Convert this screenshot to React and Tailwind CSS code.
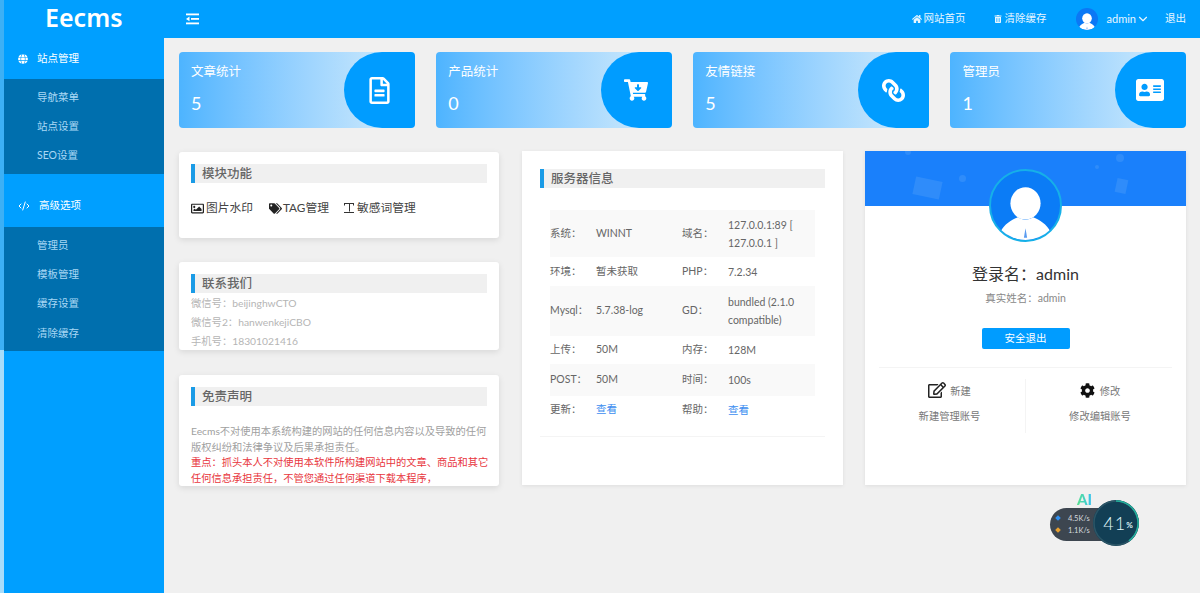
import React from 'react';
import { CodeXml, ChevronDown } from 'lucide-react';
import { FaRegFileAlt, FaCartArrowDown, FaLink, FaAddressCard, FaHome, FaTrashAlt, FaRegImage, FaTags, FaRegEdit, FaCog, FaGlobe } from 'react-icons/fa';

const font = "font-['Lato','Noto_Sans_CJK_SC',sans-serif]";

const UserGlyph = ({ className }) => (
  <svg viewBox="0 0 64 64" className={className}>
    <ellipse cx="32" cy="30" rx="14" ry="15" fill="#fff" />
    <path d="M9 56c3-6 10-11 16-13 4 3 10 3 14 0 6 2 13 7 16 13-6 5-14 8-23 8S15 61 9 56z" fill="#fff" />
    <path d="M32 53l-1.500 9h3z" fill="#5a9bf0" />
  </svg>
);

const OutdentIcon = () => (
  <svg viewBox="0 0 13 12" className="w-[13px] h-[12px] ml-[22px]" fill="#fff">
    <rect x="0" y="0.500" width="13" height="1.800" />
    <rect x="5" y="5" width="8" height="1.800" />
    <path d="M0 5.900l3.500-2.400v4.800z" />
    <rect x="0" y="9.500" width="13" height="1.800" />
  </svg>
);

const IBeamIcon = () => (
  <svg viewBox="0 0 12 12" className="w-[12px] h-[12px] ml-[14px] mr-[2px]" fill="#333">
    <path d="M1 1h10v2.500h-1V2H7v7.500H6V2H6h-1v7.500H5V2H2v1.500H1zM1 10h10v1H1z" />
  </svg>
);

const menus = [
  { title: '站点管理', icon: <FaGlobe size={10} />, h: 'h-[41px]', items: ['导航菜单', '站点设置', 'SEO设置'] },
  { title: '高级选项', icon: <CodeXml size={12} strokeWidth={2} />, h: 'h-[53px] pt-[11px]', items: ['管理员', '模板管理', '缓存设置', '清除缓存'] },
];

const stats = [
  { title: '文章统计', value: 5, icon: <FaRegFileAlt size={27} /> },
  { title: '产品统计', value: 0, icon: <FaCartArrowDown size={24} /> },
  { title: '友情链接', value: 5, icon: <FaLink size={23} className="-scale-x-100" /> },
  { title: '管理员', value: 1, icon: <FaAddressCard size={28} /> },
];

const server = [
  ['系统：', 'WINNT', '域名：', '127.0.0.1:89 [ 127.0.0.1 ]', 'h-[47px] bg-[#f9f9f9]'],
  ['环境：', '暂未获取', 'PHP：', '7.2.34', 'h-[29px]'],
  ['Mysql：', '5.7.38-log', 'GD：', 'bundled (2.1.0 compatible)', 'h-[50px] bg-[#f9f9f9]'],
  ['上传：', '50M', '内存：', '128M', 'h-[28px]'],
  ['POST：', '50M', '时间：', '100s', 'h-[32px] bg-[#f9f9f9]'],
  ['更新：', '查看', '帮助：', '查看', 'h-[28px]'],
];

const CardTitle = ({ children }) => (
  <div className="h-[19px] bg-[#f0f0f0] border-l-4 border-[#1a9be6] pl-[7px] text-[12.500px] leading-[19px] font-medium text-[#666]">
    {children}
  </div>
);

const StatCard = ({ title, value, icon }) => (
  <div className="relative w-[235.500px] h-[76px] rounded-[4px] overflow-hidden bg-gradient-to-r from-[#4db4ff] to-[#d8eefb] text-white">
    <div className="pl-3 pt-[11px] text-[12.500px] leading-[18px]">{title}</div>
    <div className="pl-3 mt-[10px] text-[18px] leading-[24px]">{value}</div>
    <div className="absolute right-0 top-0 w-[71px] h-[76px] rounded-l-[38px] bg-[#009cff] flex items-center justify-center">
      {icon}
    </div>
  </div>
);

export default function App() {
  return (
    <div className={`${font} relative h-[593px] w-[1200px] overflow-hidden bg-[#f0f0f0] flex`}>
      {/* Thin strip down the left edge */}
      <div className="w-1 shrink-0 flex flex-col">
        <div className="h-[350px] bg-[#3cb0f5]" />
        <div className="flex-1 bg-[#a8dcfa]" />
      </div>

      <div className="flex-1 min-w-0 flex flex-col">
        {/* Header */}
        <header className="h-[38px] shrink-0 bg-[#009fff] flex items-center text-white">
          <div className="w-[160px] pl-[41px] font-['Noto_Sans',sans-serif] text-[25px] font-semibold leading-none pb-[4px]">Eecms</div>
          <OutdentIcon />
          <div className="ml-auto flex items-center text-[10.500px] text-[#e8f6ff]">
            <FaHome size={10} className="mr-[2px]" />
            <span>网站首页</span>
            <FaTrashAlt size={8} className="ml-[28px] mr-[3px]" />
            <span>清除缓存</span>
            <div className="ml-[29px] w-[22px] h-[22px] rounded-full bg-[#0b78f5] overflow-hidden">
              <UserGlyph className="w-full h-full" />
            </div>
            <span className="ml-[9px] text-[11px]">admin</span>
            <ChevronDown size={14} />
            <span className="ml-[15px] mr-[14px]">退出</span>
          </div>
        </header>

        <div className="flex flex-1 min-h-0">
          {/* Sidebar */}
          <aside className="w-[160px] shrink-0 bg-[#009fff] text-white">
            {menus.map((m) => (
              <div key={m.title}>
                <div className={`${m.h} flex items-center pl-[14px] gap-[9px] text-[10.500px]`}>
                  {m.icon}
                  <span>{m.title}</span>
                </div>
                <div className="bg-[#006fae] pt-1 pb-[3px]">
                  {m.items.map((i) => (
                    <div key={i} className="h-[29.300px] flex items-center pl-[33px] text-[10.500px] text-[#a9d8f5]">{i}</div>
                  ))}
                </div>
              </div>
            ))}
          </aside>

          {/* Main */}
          <main className="flex-1 pl-[15px] pt-[14px] text-[#666]">
            <div className="flex justify-between w-[1007px]">
              {stats.map((s) => <StatCard key={s.title} {...s} />)}
            </div>

            <div className="flex mt-[24px] items-start">
              <div className="w-[320px] flex flex-col">
                <section className="h-[86px] bg-white rounded-[3px] shadow-[0_2px_6px_rgba(0,0,0,0.1)] px-3 pt-3">
                  <CardTitle>模块功能</CardTitle>
                  <div className="flex items-center mt-[15px] text-[11.750px] text-[#444] leading-[20px]">
                    <FaRegImage size={13} className="mr-[2px] text-[#222]" />图片水印
                    <FaTags size={13} className="ml-[16px] mr-[1px] text-[#222]" />TAG管理
                    <IBeamIcon />敏感词管理
                  </div>
                </section>

                <section className="h-[88px] mt-[24px] bg-white rounded-[3px] shadow-[0_2px_6px_rgba(0,0,0,0.1)] px-3 pt-3 overflow-hidden">
                  <CardTitle>联系我们</CardTitle>
                  <div className="pt-[1px] text-[10.300px] leading-[19px] text-[#b5b5b5]">
                    <p>微信号：beijinghwCTO</p>
                    <p>微信号2：hanwenkejiCBO</p>
                    <p>手机号：18301021416</p>
                  </div>
                </section>

                <section className="h-[111px] mt-[25px] bg-white rounded-[3px] shadow-[0_2px_6px_rgba(0,0,0,0.1)] pl-3 pr-[9px] pt-3 overflow-hidden">
                  <div className="mr-[3px]"><CardTitle>免责声明</CardTitle></div>
                  <div className="mt-[18px] text-[10.250px] leading-[15.500px] text-[#a0a0a0]">
                    <p>Eecms不对使用本系统构建的网站的任何信息内容以及导致的任何版权纠纷和法律争议及后果承担责任。</p>
                    <p className="text-[#e8363d]">重点：抓头本人不对使用本软件所构建网站中的文章、商品和其它任何信息承担责任，不管您通过任何渠道下载本程序，</p>
                  </div>
                </section>
              </div>

              <section className="w-[321px] h-[334px] -mt-[1px] ml-[23px] bg-white shadow-[0_1px_4px_rgba(0,0,0,0.08)] pt-[18px] px-[18px]">
                <CardTitle>服务器信息</CardTitle>
                <div className="mt-[22px] mx-[10px] text-[10.500px] text-[#666]">
                  {server.map((r) => (
                    <div key={r[0]} className={`${r[4]} flex items-center`}>
                      <span className="w-[46px]">{r[0]}</span>
                      <span className={`w-[86px] ${r[1] === '查看' ? 'text-[#3d8ef0]' : ''}`}>{r[1]}</span>
                      <span className="w-[46px]">{r[2]}</span>
                      <span className={`w-[86px] leading-[18px] ${r[3] === '查看' ? 'text-[#3d8ef0]' : ''}`}>{r[3]}</span>
                    </div>
                  ))}
                </div>
                <div className="mt-[12px] border-t border-[#f4f4f4]" />
              </section>

              <section className="relative w-[321px] h-[334px] -mt-[1px] ml-[22px] bg-white shadow-[0_1px_4px_rgba(0,0,0,0.08)]">
                <div className="relative h-[55px] bg-[#1a80fb] overflow-hidden">
                  <span className="absolute left-[49px] top-[28px] w-[27px] h-[18px] rotate-12 bg-[#2f8cfa]" />
                  <span className="absolute left-[94px] top-[24px] w-[7px] h-[7px] rounded-full bg-[#2f8cfa]" />
                  <span className="absolute left-[40px] -top-[2px] w-[6px] h-[6px] rounded-full bg-[#2f8cfa]" />
                  <span className="absolute left-[251px] top-[28px] w-[11px] h-[14px] rotate-12 bg-[#2f8cfa]" />
                  <span className="absolute left-[251px] top-[3px] w-[8px] h-[8px] rounded-full bg-[#2f8cfa]" />
                  <span className="absolute left-[230px] top-[14px] w-[4px] h-[4px] rounded-full bg-[#2f8cfa]" />
                </div>
                <div className="absolute left-[124px] top-[18px] w-[73px] h-[73px] rounded-full border-2 border-[#16b0e8] bg-[#0b7cf6] overflow-hidden">
                  <UserGlyph className="w-full h-full" />
                </div>
                <div className="mt-[55px] text-center text-[16px] leading-[26px] text-[#333]">登录名：admin</div>
                <div className="text-center text-[10.500px] leading-[18px] mt-[2px] text-[#888]">真实姓名：admin</div>
                <div className="mt-[21px] mx-auto w-[88px] h-[21px] rounded-[2px] bg-[#009cff] text-white text-[10.500px] leading-[21px] text-center">安全退出</div>
                <div className="mx-[14px] mt-[18px] border-t border-[#f4f4f4]" />
                <div className="flex mt-[11px] h-[54px] text-[10.300px] text-[#777]">
                  <div className="w-[161px] border-r border-[#f4f4f4] text-center pl-[9px]">
                    <div className="flex items-center justify-center h-[22px] gap-[4px]">
                      <FaRegEdit size={18} className="text-[#222]" /><span className="pt-[4px]">新建</span>
                    </div>
                    <div className="mt-[8px]">新建管理账号</div>
                  </div>
                  <div className="flex-1 text-center pr-[12px]">
                    <div className="flex items-center justify-center h-[22px] gap-[5px]">
                      <FaCog size={15} className="text-[#111]" /><span className="pt-[4px]">修改</span>
                    </div>
                    <div className="mt-[8px]">修改编辑账号</div>
                  </div>
                </div>
              </section>
            </div>
          </main>
        </div>
      </div>

      {/* Speed widget, floats over the page */}
      <div className="absolute left-[1050px] top-[492px] w-[89px] h-[54px]">
        <div className="absolute left-[27px] top-0 text-[15px] font-black leading-none text-transparent bg-clip-text bg-gradient-to-r from-[#58e08a] to-[#38c0f0]">AI</div>
        <div className="absolute left-0 top-[16px] w-[70px] h-[33px] rounded-full bg-[#3d4650] text-[7.500px] text-[#d5dade] pl-[18px] pt-[5px] leading-[12px]">
          <div>4.5K/s</div>
          <div>1.1K/s</div>
          <span className="absolute left-[6px] top-[8px] w-[4px] h-[4px] rotate-45 bg-[#2f8ff0]" />
          <span className="absolute left-[6px] top-[20px] w-[4px] h-[4px] rotate-45 bg-[#e8a030]" />
        </div>
        <div className="absolute left-[43px] top-[8px] w-[46px] h-[46px] rounded-full bg-[#123f55] flex items-center justify-center pl-[4px] text-[#dff4f6] text-[18px] font-light leading-none tracking-[1px]">
          <svg viewBox="0 0 46 46" className="absolute inset-0">
            <circle cx="23" cy="23" r="22" fill="none" stroke="#2b5566" strokeWidth="1.500" />
            <path d="M23 1a22 22 0 0 1 13 39.800" fill="none" stroke="#22b09c" strokeWidth="1.500" />
          </svg>
          41<span className="text-[8px] font-bold mt-[4px] tracking-normal">%</span>
        </div>
      </div>
    </div>
  );
}
